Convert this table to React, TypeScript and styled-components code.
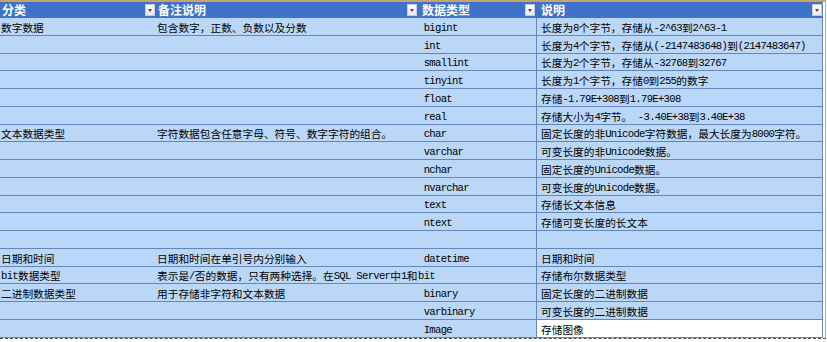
import React from 'react';
import styled, { createGlobalStyle } from 'styled-components';

const Global = createGlobalStyle`
  html, body { margin: 0; padding: 0; background: #ffffff; }
  body { width: 827px; height: 342px; overflow: hidden; }
`;

const COLS = '157px 260px 119px 286px';
const LINE = '#6486bb';
const ROW_BG = '#bad7f7';

const Frame = styled.div`
  width: 825px;
  border-top: 2px solid #c9a46a;
  border-right: 1px solid #b4b4b4;
  border-bottom: 1px dashed #4a4a4a;
  background: #ffffff;
`;

const Table = styled.div`
  width: 823px;
  border-right: 1px solid ${LINE};
  box-sizing: border-box;
  font-family: "Noto Sans CJK SC", "Noto Sans", sans-serif;
`;

const HeaderRow = styled.div`
  display: grid;
  grid-template-columns: ${COLS};
  height: 16px;
  background: #3e73c9;
  color: #ffffff;
  font-weight: 700;
  font-size: 12px;
`;

const HeaderCell = styled.div<{ $pad: number; $padRight: number }>`
  display: flex;
  align-items: center;
  justify-content: space-between;
  padding-left: ${(p) => p.$pad}px;
  padding-right: ${(p) => p.$padRight}px;
  white-space: nowrap;
  line-height: 16px;
  min-width: 0;
`;

const FilterButton = styled.span`
  flex: none;
  width: 10px;
  height: 12px;
  box-sizing: border-box;
  background: linear-gradient(#ffffff, #e6eaf1);
  border: 1px solid #c6cdd9;
  display: flex;
  align-items: center;
  justify-content: center;
  &::after {
    content: '';
    border-left: 2.5px solid transparent;
    border-right: 2.5px solid transparent;
    border-top: 3px solid #7a3434;
  }
`;

const DataRow = styled.div`
  display: grid;
  grid-template-columns: ${COLS};
  height: 17.77px;
  box-sizing: border-box;
  border-bottom: 1px solid ${LINE};
  background: ${ROW_BG};
`;

const Cell = styled.div<{ $pad: number; $divider?: boolean; $selected?: boolean }>`
  display: flex;
  align-items: flex-end;
  padding-left: ${(p) => p.$pad}px;
  padding-bottom: 0;
  box-sizing: border-box;
  white-space: pre;
  overflow: hidden;
  font-size: 10.7px;
  line-height: 14px;
  color: #000000;
  border-left: ${(p) => (p.$divider ? `1px solid ${LINE}` : 'none')};
  background: ${(p) => (p.$selected ? '#ffffff' : 'transparent')};
`;

const Latin = styled.span`
  font-family: "Liberation Mono", "DejaVu Sans Mono", monospace;
  font-size: 10.6px;
  letter-spacing: -0.7px;
`;

function Mixed({ text }: { text: string }) {
  const parts = text.split(/([\u0000-\u024F]+)/).filter((s) => s.length > 0);
  return (
    <>
      {parts.map((part, i) =>
        /^[\u0000-\u024F]+$/.test(part) ? <Latin key={i}>{part}</Latin> : <span key={i}>{part}</span>
      )}
    </>
  );
}

type Row = { c1: string; c2: string; c3: string; c4: string; selected?: boolean };

const rows: Row[] = [
  { c1: '数字数据', c2: '包含数字，正数、负数以及分数', c3: ' bigint', c4: '长度为8个字节，存储从-2^63到2^63-1' },
  { c1: '', c2: '', c3: ' int', c4: '长度为4个字节，存储从(-2147483648)到(2147483647)' },
  { c1: '', c2: '', c3: ' smallint', c4: '长度为2个字节，存储从-32768到32767' },
  { c1: '', c2: '', c3: ' tinyint', c4: '长度为1个字节，存储0到255的数字' },
  { c1: '', c2: '', c3: ' float', c4: '存储-1.79E+308到1.79E+308' },
  { c1: '', c2: '', c3: ' real', c4: '存储大小为4字节。 -3.40E+38到3.40E+38' },
  { c1: '文本数据类型', c2: '字符数据包含任意字母、符号、数字字符的组合。', c3: ' char', c4: '固定长度的非Unicode字符数据，最大长度为8000字符。' },
  { c1: '', c2: '', c3: ' varchar', c4: '可变长度的非Unicode数据。' },
  { c1: '', c2: '', c3: ' nchar', c4: '固定长度的Unicode数据。' },
  { c1: '', c2: '', c3: ' nvarchar', c4: '可变长度的Unicode数据。' },
  { c1: '', c2: '', c3: ' text', c4: '存储长文本信息' },
  { c1: '', c2: '', c3: ' ntext', c4: '存储可变长度的长文本' },
  { c1: '', c2: '', c3: '', c4: '' },
  { c1: '日期和时间', c2: '日期和时间在单引号内分别输入', c3: ' datetime', c4: '日期和时间' },
  { c1: 'bit数据类型', c2: '表示是/否的数据，只有两种选择。在SQL Server中1和', c3: 'bit', c4: '存储布尔数据类型' },
  { c1: '二进制数据类型', c2: '用于存储非字符和文本数据', c3: ' binary', c4: '固定长度的二进制数据' },
  { c1: '', c2: '', c3: ' varbinary', c4: '可变长度的二进制数据' },
  { c1: '', c2: '', c3: ' Image', c4: '存储图像', selected: true },
];

export default function App() {
  return (
    <>
      <Global />
      <Frame>
        <Table>
          <HeaderRow>
            <HeaderCell $pad={2} $padRight={2}>
              <span>分类</span>
              <FilterButton />
            </HeaderCell>
            <HeaderCell $pad={1} $padRight={0}>
              <span>备注说明</span>
              <FilterButton />
            </HeaderCell>
            <HeaderCell $pad={5} $padRight={1}>
              <span>数据类型</span>
              <FilterButton />
            </HeaderCell>
            <HeaderCell $pad={5} $padRight={0}>
              <span>说明</span>
              <FilterButton />
            </HeaderCell>
          </HeaderRow>
          {rows.map((r, i) => (
            <DataRow key={i}>
              <Cell $pad={1}>
                <Mixed text={r.c1} />
              </Cell>
              <Cell $pad={0}>
                <Mixed text={r.c2} />
              </Cell>
              <Cell $pad={1}>
                <Mixed text={r.c3} />
              </Cell>
              <Cell $pad={4} $divider $selected={r.selected}>
                <Mixed text={r.c4} />
              </Cell>
            </DataRow>
          ))}
        </Table>
      </Frame>
    </>
  );
}
